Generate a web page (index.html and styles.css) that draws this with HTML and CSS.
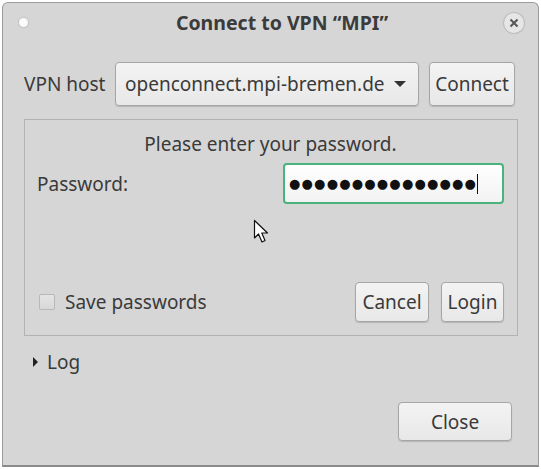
FILE: index.html
```html
<!DOCTYPE html>
<html>
    <head>
        <meta charset="utf-8">
        <title>Connect to VPN “MPI”</title>
        <link rel="stylesheet" href="styles.css">
    </head>
    <body>
        <div class="window">
            <div class="titlebar">
                <span class="dot"></span>
                <span class="title">Connect to VPN “MPI”</span>
                <span class="close-x">
                    <svg width="12" height="12" viewBox="0 0 12 12"><path d="M2.5 2.5 L9.5 9.5 M9.5 2.5 L2.5 9.5" stroke="#555" stroke-width="2"/></svg>
                </span>
            </div>

            <div class="content">
                <div class="host-row">
                    <span class="label">VPN host</span>
                    <div class="btn combo">
                        <span>openconnect.mpi-bremen.de</span>
                        <span class="arrow-down"></span>
                    </div>
                    <div class="btn connect">Connect</div>
                </div>

                <div class="frame">
                    <p class="message">Please enter your password.</p>
                    <div class="pass-row">
                        <span class="label">Password:</span>
                        <div class="entry">
                            <span class="dots">●●●●●●●●●●●●●●●</span><span class="caret"></span>
                        </div>
                    </div>
                    <div class="bottom-row">
                        <label class="check">
                            <span class="box"></span>
                            <span>Save passwords</span>
                        </label>
                        <div class="actions">
                            <div class="btn cancel">Cancel</div>
                            <div class="btn login">Login</div>
                        </div>
                    </div>
                </div>

                <div class="log-row">
                    <span class="arrow-right"></span>
                    <span>Log</span>
                </div>

                <div class="footer">
                    <div class="btn close-btn">Close</div>
                </div>
            </div>

            <!-- mouse pointer from the screenshot -->
            <svg class="pointer" width="20" height="26" viewBox="0 0 20 26">
                <path d="M1.5 1.5 L1.5 19 L5.5 15 L9 23 L12 21.5 L8.8 14 L14.5 14 Z" fill="#fff" stroke="#111" stroke-width="1.2" stroke-linejoin="round"/>
            </svg>
        </div>
    </body>
</html>
```

FILE: styles.css
```css
html, body {
    margin: 0;
    background: #ffffff;
}
body {
    font-family: "Noto Sans", "Open Sans", sans-serif;
    font-size: 19px;
    color: #3a3a3a;
}
.window {
    position: relative;
    box-sizing: border-box;
    margin: 2px 0 0 2px;
    width: 537px;
    height: 465px;
    background: #d6d6d6;
    border: 1px solid #9c9c9c;
    border-bottom: 2px solid #8a8a8a;
    border-radius: 6px 6px 0 0;
}
.titlebar {
    height: 39px;
    display: grid;
    grid-template-columns: 1fr auto 1fr;
    align-items: center;
    padding: 0 14px 0 16px;
}
.dot {
    width: 9px;
    height: 9px;
    border-radius: 50%;
    background: #fbfbfb;
    box-shadow: 0 0 1px 1px #c4c4c4;
}
.title {
    font-weight: bold;
    font-size: 19.5px;
    color: #3b3b3b;
    padding-left: 21px;
}
.close-x {
    justify-self: end;
    width: 20px;
    height: 20px;
    border-radius: 50%;
    background: #e6e6e6;
    box-shadow: 0 0 1px 1px #bcbcbc;
    display: flex;
    align-items: center;
    justify-content: center;
}
.content {
    padding: 0 21px 0 21px;
}
.host-row {
    margin-top: 20px;
    display: flex;
    align-items: center;
    height: 44px;
}
.host-row .label {
    width: 91px;
}
.btn {
    box-sizing: border-box;
    display: flex;
    align-items: center;
    justify-content: center;
    background: linear-gradient(#f3f3f3, #e8e8e8);
    border: 1px solid #a6a6a6;
    border-radius: 4px;
    box-shadow: 0 1px 1px rgba(0, 0, 0, .15);
}
.combo {
    width: 304px;
    height: 44px;
    justify-content: space-between;
    padding: 0 12px 0 9px;
}
.arrow-down {
    width: 0;
    height: 0;
    border-left: 6px solid transparent;
    border-right: 6px solid transparent;
    border-top: 6px solid #333;
}
.connect {
    width: 86px;
    height: 44px;
    margin-left: 10px;
}
.frame {
    box-sizing: border-box;
    margin-top: 13px;
    width: 494px;
    height: 217px;
    border: 1px solid #b3b3b3;
    padding: 12px 13px 13px 12px;
    display: flex;
    flex-direction: column;
}
.message {
    margin: 0;
    text-align: center;
    line-height: 24px;
}
.pass-row {
    margin-top: 7px;
    display: flex;
    justify-content: space-between;
    align-items: center;
    height: 41px;
}
.entry {
    box-sizing: border-box;
    width: 221px;
    height: 41px;
    border: 2px solid #4ab27c;
    border-radius: 4px;
    background: linear-gradient(#ffffff, #f2f2f2);
    display: flex;
    align-items: center;
    padding-left: 4px;
}
.dots {
    font-family: "DejaVu Sans", sans-serif;
    font-size: 13px;
    letter-spacing: 1.2px;
    color: #111;
}
.caret {
    width: 1px;
    height: 20px;
    background: #111;
    margin-left: 0;
}
.bottom-row {
    margin-top: auto;
    display: flex;
    justify-content: space-between;
    align-items: center;
    height: 40px;
}
.check {
    display: flex;
    align-items: center;
    padding-left: 2px;
}
.box {
    box-sizing: border-box;
    width: 16px;
    height: 16px;
    border: 1px solid #b8b8b8;
    border-radius: 2px;
    background: linear-gradient(#e4e4e4, #d8d8d8);
    margin-right: 10px;
}
.actions {
    display: flex;
    gap: 12px;
}
.cancel {
    width: 74px;
    height: 40px;
}
.login {
    width: 63px;
    height: 40px;
}
.log-row {
    margin-top: 15px;
    display: flex;
    align-items: center;
    height: 22px;
    padding-left: 9px;
}
.arrow-right {
    width: 0;
    height: 0;
    border-top: 5px solid transparent;
    border-bottom: 5px solid transparent;
    border-left: 5px solid #222;
    margin-right: 9px;
}
.footer {
    margin-top: 29px;
    display: flex;
    justify-content: flex-end;
    padding-right: 5px;
}
.close-btn {
    width: 114px;
    height: 39px;
}
.pointer {
    position: absolute;
    left: 250px;
    top: 216px;
}
```
